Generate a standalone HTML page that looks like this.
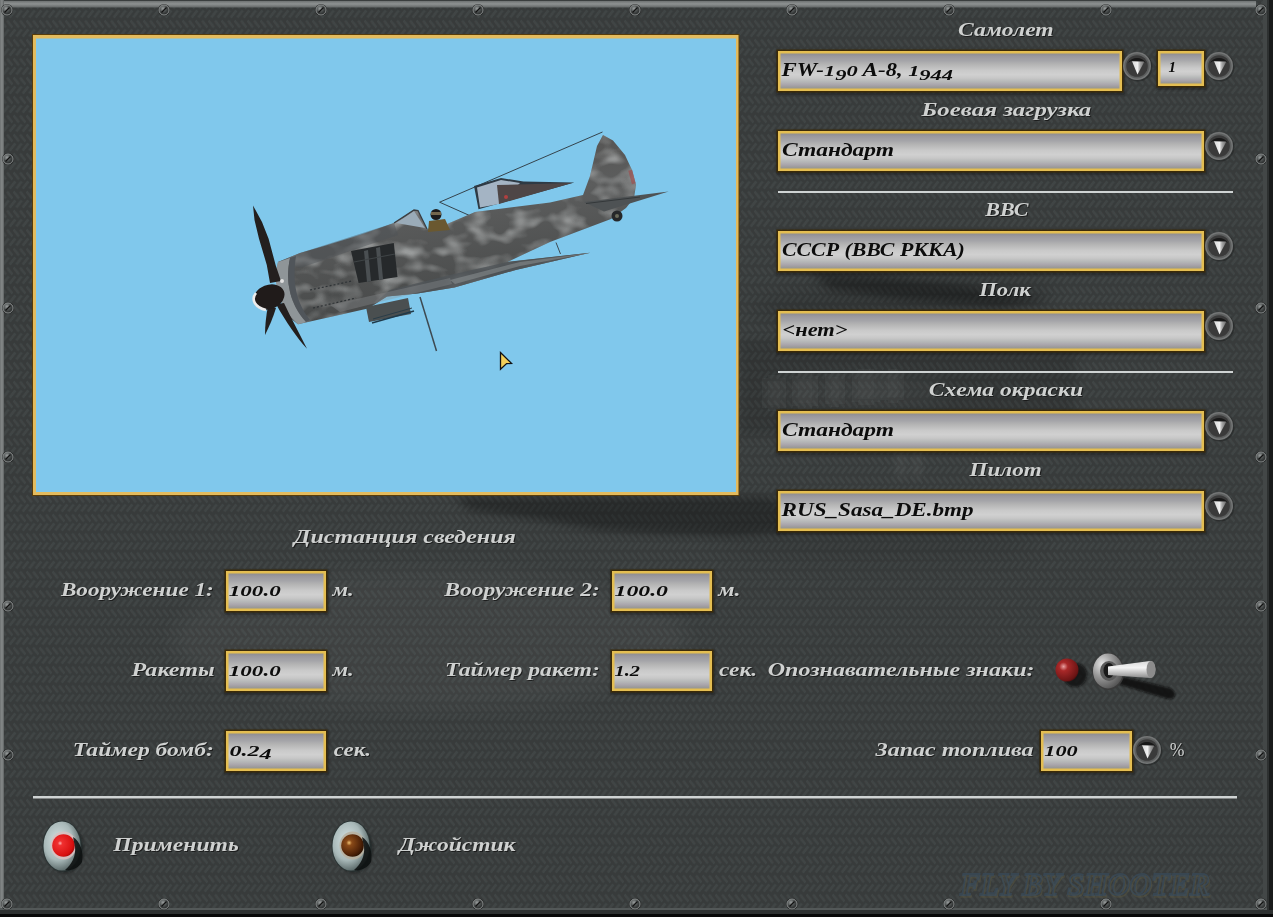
<!DOCTYPE html><html><head><meta charset="utf-8"><style>
html,body{margin:0;padding:0;}body{width:1273px;height:917px;overflow:hidden;background:#3a3d3d;position:relative;}
svg{position:absolute;left:0;top:0;}
</style></head><body>
<svg width="1273" height="917" viewBox="0 0 1273 917">
<defs>
<linearGradient id="fg" x1="0" y1="0" x2="0" y2="1"><stop offset="0" stop-color="#8e8c90"/><stop offset="0.08" stop-color="#9a989e"/><stop offset="0.2" stop-color="#a4a4a8"/><stop offset="0.31" stop-color="#b4b4b4"/><stop offset="0.49" stop-color="#cacaca"/><stop offset="0.6" stop-color="#d0d0d0"/><stop offset="0.7" stop-color="#c8c8c8"/><stop offset="0.8" stop-color="#b6b8b8"/><stop offset="0.89" stop-color="#aaa6ac"/><stop offset="1" stop-color="#94948f"/></linearGradient>
<clipPath id="bluec"><rect x="36" y="38.5" width="700" height="453.5"/></clipPath>
<clipPath id="fusc"><polygon points="278,262 300,253 325,245.7 360,235 394,223 414,210 418,210.5 427,229 447,224 475,212 550,202.4 583,195 590,176 597,146 603,135 613,140.6 625,155 632,170 636,185 634,198 626,208 611,219 550,242 507.5,261.9 590.2,252.7 515.7,270 454.4,287.4 417.6,293.5 387,296.6 368,308.6 298,324.3 290,318 282,300 276,280"/></clipPath>
<filter id="mottle" x="0" y="0" width="100%" height="100%"><feTurbulence type="fractalNoise" baseFrequency="0.045 0.07" numOctaves="2" seed="11"/><feColorMatrix type="matrix" values="0 0 0 0 0.58  0 0 0 0 0.60  0 0 0 0 0.60  2.4 0 0 0 -1.05"/></filter>
<linearGradient id="pfus" x1="0" y1="0" x2="0.25" y2="1"><stop offset="0" stop-color="#504e4c"/><stop offset="0.45" stop-color="#5c5d5d"/><stop offset="1" stop-color="#464848"/></linearGradient>
<linearGradient id="topstrip" x1="0" y1="0" x2="0" y2="1"><stop offset="0" stop-color="#6e7272"/><stop offset="0.45" stop-color="#8e9292"/><stop offset="1" stop-color="#626666"/></linearGradient>
<linearGradient id="leftstrip" x1="0" y1="0" x2="1" y2="0"><stop offset="0" stop-color="#6e7272"/><stop offset="0.5" stop-color="#868a8a"/><stop offset="1" stop-color="#5e6262"/></linearGradient>
<radialGradient id="screw" cx="0.4" cy="0.35" r="0.7"><stop offset="0" stop-color="#9a9e9e"/><stop offset="0.5" stop-color="#4a4e4e"/><stop offset="1" stop-color="#1e2020"/></radialGradient>
<radialGradient id="reddome" cx="0.35" cy="0.4" r="0.7"><stop offset="0" stop-color="#ffb0b0"/><stop offset="0.15" stop-color="#f03030"/><stop offset="0.8" stop-color="#d81010"/><stop offset="1" stop-color="#a00808"/></radialGradient>
<radialGradient id="browndome" cx="0.35" cy="0.38" r="0.7"><stop offset="0" stop-color="#f0c070"/><stop offset="0.18" stop-color="#8a4a18"/><stop offset="0.75" stop-color="#4e2208"/><stop offset="1" stop-color="#2a1000"/></radialGradient>
<radialGradient id="ring" cx="0.4" cy="0.4" r="0.65"><stop offset="0" stop-color="#d8e4e4"/><stop offset="0.6" stop-color="#a8b8b8"/><stop offset="1" stop-color="#4e5c5c"/></radialGradient>
<radialGradient id="led" cx="0.35" cy="0.35" r="0.75"><stop offset="0" stop-color="#e8a0a0"/><stop offset="0.25" stop-color="#a82828"/><stop offset="0.85" stop-color="#6a1414"/><stop offset="1" stop-color="#3a0a0a"/></radialGradient>
<radialGradient id="tbase" cx="0.3" cy="0.3" r="0.8"><stop offset="0" stop-color="#e4e4e4"/><stop offset="0.45" stop-color="#9a9a9a"/><stop offset="1" stop-color="#4e4e4e"/></radialGradient>
<linearGradient id="lever" x1="0" y1="0" x2="0" y2="1"><stop offset="0" stop-color="#d8d8d8"/><stop offset="0.4" stop-color="#f4f4f4"/><stop offset="1" stop-color="#8a8a8a"/></linearGradient>
<radialGradient id="ddinner" cx="0.5" cy="0.7" r="0.7"><stop offset="0" stop-color="#4a4a4a"/><stop offset="1" stop-color="#1e1e1e"/></radialGradient>
<linearGradient id="tri" x1="0" y1="0" x2="1" y2="0"><stop offset="0" stop-color="#d8d8d8"/><stop offset="0.45" stop-color="#f0f0f0"/><stop offset="0.65" stop-color="#a8a8a8"/><stop offset="1" stop-color="#6a6a6a"/></linearGradient>
<pattern id="herring" x="0" y="0" width="6.5" height="19" patternUnits="userSpaceOnUse"><rect width="6.5" height="19" fill="#373b3b"/><path d="M0.5,1.5 L6,8.5 M3.25,17.5 L8.75,10.5 M-3.25,17.5 L2.25,10.5" stroke="#414545" stroke-width="2.6"/></pattern>
<filter id="blur3" x="0" y="0" width="1273" height="917" filterUnits="userSpaceOnUse"><feGaussianBlur stdDeviation="4"/></filter>
<filter id="hblur" x="0" y="0" width="1273" height="917" filterUnits="userSpaceOnUse"><feGaussianBlur stdDeviation="0.7"/></filter>
<filter id="blur2" x="-50%" y="-50%" width="200%" height="200%"><feGaussianBlur stdDeviation="2"/></filter>
<filter id="blur1" x="-50%" y="-50%" width="200%" height="200%"><feGaussianBlur stdDeviation="1"/></filter>
<filter id="blur8" x="0" y="0" width="1273" height="917" filterUnits="userSpaceOnUse"><feGaussianBlur stdDeviation="10"/></filter>
</defs>
<rect x="0" y="0" width="1273" height="917" fill="#3a3d3d"/>
<rect x="0" y="0" width="1273" height="917" fill="url(#herring)" filter="url(#hblur)"/>
<rect x="0" y="0" width="1273" height="1" fill="#3a3e3e"/>
<rect x="0" y="1" width="1256" height="6.5" fill="url(#topstrip)"/>
<g filter="url(#blur8)">
<ellipse cx="900" cy="300" rx="150" ry="22" fill="#000" opacity="0.12" transform="rotate(-4 900 300)"/>
<ellipse cx="860" cy="392" rx="90" ry="16" fill="#fff" opacity="0.05"/>
<ellipse cx="880" cy="545" rx="160" ry="16" fill="#000" opacity="0.07"/>
<ellipse cx="430" cy="640" rx="260" ry="70" fill="#fff" opacity="0.035"/>
</g>
<g filter="url(#blur3)"><polygon points="455,497 770,497 795,515 785,532 730,536 660,534 600,530 540,520 470,510" fill="#000" opacity="0.3"/>
<polygon points="810,272 880,276 960,285 1050,300 1000,307 900,299 830,289" fill="#000" opacity="0.3"/>
<polygon points="740,340 1075,335 1075,425 740,435" fill="#000" opacity="0.12"/>
<path d="M765,378 h18 v30 h-18 z M795,376 h20 v30 h-20 z M828,374 h14 v30 h-14 z M855,372 h22 v30 h-22 z M885,372 h16 v28 h-16 z" fill="#fff" opacity="0.04"/>
<path d="M897,448 h8 v30 h-8 z M913,448 h8 v30 h-8 z" fill="#fff" opacity="0.06"/>
</g>
<rect x="0" y="0" width="4" height="917" fill="url(#leftstrip)"/>
<rect x="1263" y="0" width="4" height="917" fill="#434747"/>
<rect x="1267" y="0" width="2" height="917" fill="#2e3131"/>
<rect x="1269" y="0" width="4" height="917" fill="#191b1b"/>
<rect x="0" y="908" width="1267" height="2" fill="#535858"/>
<rect x="0" y="910" width="1273" height="4" fill="#2e3131"/>
<rect x="0" y="914" width="1273" height="3" fill="#080808"/>
<circle cx="7" cy="10" r="6" fill="#202222" opacity="0.8"/>
<circle cx="7" cy="10" r="5" fill="url(#screw)" stroke="#8a8e8e" stroke-width="1"/>
<line x1="4.5" y1="12.5" x2="9.5" y2="7.5" stroke="#111" stroke-width="1.3"/>
<circle cx="7" cy="904" r="6" fill="#202222" opacity="0.8"/>
<circle cx="7" cy="904" r="5" fill="url(#screw)" stroke="#8a8e8e" stroke-width="1"/>
<line x1="4.5" y1="906.5" x2="9.5" y2="901.5" stroke="#111" stroke-width="1.3"/>
<circle cx="164" cy="10" r="6" fill="#202222" opacity="0.8"/>
<circle cx="164" cy="10" r="5" fill="url(#screw)" stroke="#8a8e8e" stroke-width="1"/>
<line x1="161.5" y1="12.5" x2="166.5" y2="7.5" stroke="#111" stroke-width="1.3"/>
<circle cx="164" cy="904" r="6" fill="#202222" opacity="0.8"/>
<circle cx="164" cy="904" r="5" fill="url(#screw)" stroke="#8a8e8e" stroke-width="1"/>
<line x1="161.5" y1="906.5" x2="166.5" y2="901.5" stroke="#111" stroke-width="1.3"/>
<circle cx="321" cy="10" r="6" fill="#202222" opacity="0.8"/>
<circle cx="321" cy="10" r="5" fill="url(#screw)" stroke="#8a8e8e" stroke-width="1"/>
<line x1="318.5" y1="12.5" x2="323.5" y2="7.5" stroke="#111" stroke-width="1.3"/>
<circle cx="321" cy="904" r="6" fill="#202222" opacity="0.8"/>
<circle cx="321" cy="904" r="5" fill="url(#screw)" stroke="#8a8e8e" stroke-width="1"/>
<line x1="318.5" y1="906.5" x2="323.5" y2="901.5" stroke="#111" stroke-width="1.3"/>
<circle cx="478" cy="10" r="6" fill="#202222" opacity="0.8"/>
<circle cx="478" cy="10" r="5" fill="url(#screw)" stroke="#8a8e8e" stroke-width="1"/>
<line x1="475.5" y1="12.5" x2="480.5" y2="7.5" stroke="#111" stroke-width="1.3"/>
<circle cx="478" cy="904" r="6" fill="#202222" opacity="0.8"/>
<circle cx="478" cy="904" r="5" fill="url(#screw)" stroke="#8a8e8e" stroke-width="1"/>
<line x1="475.5" y1="906.5" x2="480.5" y2="901.5" stroke="#111" stroke-width="1.3"/>
<circle cx="635" cy="10" r="6" fill="#202222" opacity="0.8"/>
<circle cx="635" cy="10" r="5" fill="url(#screw)" stroke="#8a8e8e" stroke-width="1"/>
<line x1="632.5" y1="12.5" x2="637.5" y2="7.5" stroke="#111" stroke-width="1.3"/>
<circle cx="635" cy="904" r="6" fill="#202222" opacity="0.8"/>
<circle cx="635" cy="904" r="5" fill="url(#screw)" stroke="#8a8e8e" stroke-width="1"/>
<line x1="632.5" y1="906.5" x2="637.5" y2="901.5" stroke="#111" stroke-width="1.3"/>
<circle cx="792" cy="10" r="6" fill="#202222" opacity="0.8"/>
<circle cx="792" cy="10" r="5" fill="url(#screw)" stroke="#8a8e8e" stroke-width="1"/>
<line x1="789.5" y1="12.5" x2="794.5" y2="7.5" stroke="#111" stroke-width="1.3"/>
<circle cx="792" cy="904" r="6" fill="#202222" opacity="0.8"/>
<circle cx="792" cy="904" r="5" fill="url(#screw)" stroke="#8a8e8e" stroke-width="1"/>
<line x1="789.5" y1="906.5" x2="794.5" y2="901.5" stroke="#111" stroke-width="1.3"/>
<circle cx="949" cy="10" r="6" fill="#202222" opacity="0.8"/>
<circle cx="949" cy="10" r="5" fill="url(#screw)" stroke="#8a8e8e" stroke-width="1"/>
<line x1="946.5" y1="12.5" x2="951.5" y2="7.5" stroke="#111" stroke-width="1.3"/>
<circle cx="949" cy="904" r="6" fill="#202222" opacity="0.8"/>
<circle cx="949" cy="904" r="5" fill="url(#screw)" stroke="#8a8e8e" stroke-width="1"/>
<line x1="946.5" y1="906.5" x2="951.5" y2="901.5" stroke="#111" stroke-width="1.3"/>
<circle cx="1106" cy="10" r="6" fill="#202222" opacity="0.8"/>
<circle cx="1106" cy="10" r="5" fill="url(#screw)" stroke="#8a8e8e" stroke-width="1"/>
<line x1="1103.5" y1="12.5" x2="1108.5" y2="7.5" stroke="#111" stroke-width="1.3"/>
<circle cx="1106" cy="904" r="6" fill="#202222" opacity="0.8"/>
<circle cx="1106" cy="904" r="5" fill="url(#screw)" stroke="#8a8e8e" stroke-width="1"/>
<line x1="1103.5" y1="906.5" x2="1108.5" y2="901.5" stroke="#111" stroke-width="1.3"/>
<circle cx="1261" cy="10" r="6" fill="#202222" opacity="0.8"/>
<circle cx="1261" cy="10" r="5" fill="url(#screw)" stroke="#8a8e8e" stroke-width="1"/>
<line x1="1258.5" y1="12.5" x2="1263.5" y2="7.5" stroke="#111" stroke-width="1.3"/>
<circle cx="1261" cy="904" r="6" fill="#202222" opacity="0.8"/>
<circle cx="1261" cy="904" r="5" fill="url(#screw)" stroke="#8a8e8e" stroke-width="1"/>
<line x1="1258.5" y1="906.5" x2="1263.5" y2="901.5" stroke="#111" stroke-width="1.3"/>
<circle cx="8" cy="159" r="6" fill="#202222" opacity="0.8"/>
<circle cx="8" cy="159" r="5" fill="url(#screw)" stroke="#8a8e8e" stroke-width="1"/>
<line x1="5.5" y1="161.5" x2="10.5" y2="156.5" stroke="#111" stroke-width="1.3"/>
<circle cx="1261" cy="159" r="6" fill="#202222" opacity="0.8"/>
<circle cx="1261" cy="159" r="5" fill="url(#screw)" stroke="#8a8e8e" stroke-width="1"/>
<line x1="1258.5" y1="161.5" x2="1263.5" y2="156.5" stroke="#111" stroke-width="1.3"/>
<circle cx="8" cy="308" r="6" fill="#202222" opacity="0.8"/>
<circle cx="8" cy="308" r="5" fill="url(#screw)" stroke="#8a8e8e" stroke-width="1"/>
<line x1="5.5" y1="310.5" x2="10.5" y2="305.5" stroke="#111" stroke-width="1.3"/>
<circle cx="1261" cy="308" r="6" fill="#202222" opacity="0.8"/>
<circle cx="1261" cy="308" r="5" fill="url(#screw)" stroke="#8a8e8e" stroke-width="1"/>
<line x1="1258.5" y1="310.5" x2="1263.5" y2="305.5" stroke="#111" stroke-width="1.3"/>
<circle cx="8" cy="457" r="6" fill="#202222" opacity="0.8"/>
<circle cx="8" cy="457" r="5" fill="url(#screw)" stroke="#8a8e8e" stroke-width="1"/>
<line x1="5.5" y1="459.5" x2="10.5" y2="454.5" stroke="#111" stroke-width="1.3"/>
<circle cx="1261" cy="457" r="6" fill="#202222" opacity="0.8"/>
<circle cx="1261" cy="457" r="5" fill="url(#screw)" stroke="#8a8e8e" stroke-width="1"/>
<line x1="1258.5" y1="459.5" x2="1263.5" y2="454.5" stroke="#111" stroke-width="1.3"/>
<circle cx="8" cy="606" r="6" fill="#202222" opacity="0.8"/>
<circle cx="8" cy="606" r="5" fill="url(#screw)" stroke="#8a8e8e" stroke-width="1"/>
<line x1="5.5" y1="608.5" x2="10.5" y2="603.5" stroke="#111" stroke-width="1.3"/>
<circle cx="1261" cy="606" r="6" fill="#202222" opacity="0.8"/>
<circle cx="1261" cy="606" r="5" fill="url(#screw)" stroke="#8a8e8e" stroke-width="1"/>
<line x1="1258.5" y1="608.5" x2="1263.5" y2="603.5" stroke="#111" stroke-width="1.3"/>
<circle cx="8" cy="755" r="6" fill="#202222" opacity="0.8"/>
<circle cx="8" cy="755" r="5" fill="url(#screw)" stroke="#8a8e8e" stroke-width="1"/>
<line x1="5.5" y1="757.5" x2="10.5" y2="752.5" stroke="#111" stroke-width="1.3"/>
<circle cx="1261" cy="755" r="6" fill="#202222" opacity="0.8"/>
<circle cx="1261" cy="755" r="5" fill="url(#screw)" stroke="#8a8e8e" stroke-width="1"/>
<line x1="1258.5" y1="757.5" x2="1263.5" y2="752.5" stroke="#111" stroke-width="1.3"/>
<g font-family="'Liberation Serif', serif" font-style="italic" font-weight="bold" fill="none">
<text x="961" y="897" font-size="32" stroke="#5e5a40" stroke-width="1.6" opacity="0.45" textLength="250" lengthAdjust="spacingAndGlyphs">FLY BY SHOOTER</text>
<text x="960" y="895" font-size="32" stroke="#3a4c5c" stroke-width="1.8" opacity="0.7" textLength="250" lengthAdjust="spacingAndGlyphs">FLY BY SHOOTER</text>
</g>
<rect x="32" y="34" width="707.5" height="462" fill="#5a3c08"/>
<rect x="33" y="35" width="705.5" height="460" fill="#e3bb5e"/>
<rect x="36" y="38.5" width="700" height="453.5" fill="#80c8ec"/>
<g clip-path="url(#bluec)">
<polyline points="602.5,132 439.6,202.2 472,216.6" fill="none" stroke="#34434c" stroke-width="1"/>
<polygon points="474,186 501,178 523.5,181.6 574.4,182.5 478.5,209.3" fill="#2e3a44"/>
<polygon points="477,187.5 501,180 520,183 499,204 480,207.5" fill="#a4b4c4"/>
<polygon points="497,185 572,183 499,204" fill="#4e4646"/>
<circle cx="506" cy="197" r="2" fill="#b04040"/>
<polygon points="278,262 300,253 325,245.7 360,235 394,223 414,210 418,210.5 427,229 447,224 475,212 550,202.4 583,195 590,176 597,146 603,135 613,140.6 625,155 632,170 636,185 634,198 626,208 611,219 550,242 507.5,261.9 590.2,252.7 515.7,270 454.4,287.4 417.6,293.5 387,296.6 368,308.6 298,324.3 290,318 282,300 276,280" fill="url(#pfus)"/>
<g clip-path="url(#fusc)"><rect x="270" y="130" width="400" height="200" filter="url(#mottle)" opacity="0.6"/></g>
<polygon points="590.2,252.7 507.5,262 450,275 390,290 368,308.6 387,296.6 417.6,293.5 454.4,287.4 515.7,270" fill="#4f5457" opacity="0.8"/>
<polygon points="590,253 520,262 450,280 455,284 520,266" fill="#8a8f92" opacity="0.55"/>
<polygon points="330,305 450,278 452,284 340,312" fill="#8e9396" opacity="0.35"/>
<polygon points="278,262 300,253 394,223 398,235 300,268" fill="#4e5356" opacity="0.45"/>
<polygon points="584,202 668.6,191.6 604,211.5" fill="#4e5254"/><line x1="586" y1="203.5" x2="640" y2="197" stroke="#34383a" stroke-width="1"/>
<circle cx="617" cy="216" r="5.5" fill="#26282a"/>
<circle cx="617" cy="216" r="2" fill="#6a6a5a"/><rect x="630" y="170" width="4" height="14" fill="#a04848" opacity="0.6" transform="rotate(-15 632 177)"/>
<path d="M278,262 C272,282 278,306 298,324.3 L306,322 C290,304 285,282 290,258 Z" fill="#8f9598"/>
<path d="M290,258 C285,282 290,304 306,322 L310,320 C296,302 292,282 296,256 Z" fill="#50555a"/>
<polygon points="351,251 393.8,243 397.5,277 358.6,283" fill="#26292b"/>
<polygon points="364,251 368,250 371,281 367,282" fill="#4a4f52"/>
<polygon points="376,248 380,247 383,279 379,280" fill="#4a4f52"/>
<line x1="354" y1="262" x2="395" y2="254" stroke="#3e4345" stroke-width="1.2"/>
<line x1="310" y1="290" x2="352" y2="281" stroke="#2e3235" stroke-width="1.2" stroke-dasharray="2 2"/>
<line x1="313" y1="308" x2="356" y2="298" stroke="#2e3235" stroke-width="1.2" stroke-dasharray="2 2"/>
<polygon points="396,223 414,211 425,228" fill="#9aabb8"/>
<polyline points="394,223 414,210 418,210.5 427,229" fill="none" stroke="#3a3e42" stroke-width="1.3"/>
<circle cx="436" cy="214.5" r="5.5" fill="#1c1c1c"/>
<rect x="431" y="212" width="10" height="3" fill="#8a7a5a" opacity="0.8"/>
<polygon points="429,221 445,219 450,230 428,232" fill="#6a5830"/>
<polygon points="366,307 408,298 411,314 369,322" fill="#4a4f50"/>
<line x1="372" y1="323" x2="414" y2="311" stroke="#1f3a4a" stroke-width="1.5"/>
<line x1="373" y1="319" x2="412" y2="308" stroke="#2a3d48" stroke-width="1"/>
<line x1="420" y1="297" x2="436.5" y2="351" stroke="#3d4a52" stroke-width="1.5"/>
<line x1="556" y1="242.5" x2="560.5" y2="254" stroke="#3d4a52" stroke-width="1"/>
<polygon points="253,205.5 262,222 268.6,238.7 275.6,264.9 281,281 270,283 266.8,264.9 259,238.7 254.5,220" fill="#231f1e"/>
<path d="M268,306 L276,308 C273,318 269,327 265,335 C265,326 266,316 268,306 Z" fill="#231f1e"/>
<path d="M276,304 L284,303 C291,318 299,333 307,348.7 C297,338 286,322 276,304 Z" fill="#231f1e"/>
<ellipse cx="269" cy="297" rx="16" ry="12" transform="rotate(-22 269 297)" fill="#201b1a"/>
<path d="M256,293 C251,299 254,307 266,310" fill="none" stroke="#ececec" stroke-width="2.6"/>
<circle cx="282" cy="281" r="2" fill="#e0e0e0"/>
</g>
<polygon points="500.5,352.5 511.5,363.4 506.6,363.6 500.5,369.3" fill="#f2cf5a" stroke="#111" stroke-width="1.3" stroke-linejoin="miter"/>
<rect x="776" y="50" width="349" height="45" fill="#141818" opacity="0.45" filter="url(#blur1)"/>
<rect x="1156" y="50" width="51" height="40" fill="#141818" opacity="0.45" filter="url(#blur1)"/>
<rect x="776" y="130" width="431" height="45" fill="#141818" opacity="0.45" filter="url(#blur1)"/>
<rect x="776" y="230" width="431" height="45" fill="#141818" opacity="0.45" filter="url(#blur1)"/>
<rect x="776" y="310" width="431" height="45" fill="#141818" opacity="0.45" filter="url(#blur1)"/>
<rect x="776" y="410" width="431" height="45" fill="#141818" opacity="0.45" filter="url(#blur1)"/>
<rect x="776" y="490" width="431" height="45" fill="#141818" opacity="0.45" filter="url(#blur1)"/>
<rect x="224" y="570" width="105" height="45" fill="#141818" opacity="0.45" filter="url(#blur1)"/>
<rect x="610" y="570" width="105" height="45" fill="#141818" opacity="0.45" filter="url(#blur1)"/>
<rect x="224" y="650" width="105" height="45" fill="#141818" opacity="0.45" filter="url(#blur1)"/>
<rect x="610" y="650" width="105" height="45" fill="#141818" opacity="0.45" filter="url(#blur1)"/>
<rect x="224" y="730" width="105" height="45" fill="#141818" opacity="0.45" filter="url(#blur1)"/>
<rect x="1039" y="730" width="96" height="45" fill="#141818" opacity="0.45" filter="url(#blur1)"/>
<rect x="776.5" y="49.5" width="347" height="43" fill="#3e2a04" opacity="0.85"/>
<rect x="778" y="51" width="344" height="40" fill="#e4be52"/>
<rect x="780.5" y="53.5" width="339" height="35" fill="url(#fg)"/>
<rect x="1156.5" y="49.5" width="49" height="38" fill="#3e2a04" opacity="0.85"/>
<rect x="1158" y="51" width="46" height="35" fill="#e4be52"/>
<rect x="1160.5" y="53.5" width="41" height="30" fill="url(#fg)"/>
<rect x="776.5" y="129.5" width="429" height="43" fill="#3e2a04" opacity="0.85"/>
<rect x="778" y="131" width="426" height="40" fill="#e4be52"/>
<rect x="780.5" y="133.5" width="421" height="35" fill="url(#fg)"/>
<rect x="776.5" y="229.5" width="429" height="43" fill="#3e2a04" opacity="0.85"/>
<rect x="778" y="231" width="426" height="40" fill="#e4be52"/>
<rect x="780.5" y="233.5" width="421" height="35" fill="url(#fg)"/>
<rect x="776.5" y="309.5" width="429" height="43" fill="#3e2a04" opacity="0.85"/>
<rect x="778" y="311" width="426" height="40" fill="#e4be52"/>
<rect x="780.5" y="313.5" width="421" height="35" fill="url(#fg)"/>
<rect x="776.5" y="409.5" width="429" height="43" fill="#3e2a04" opacity="0.85"/>
<rect x="778" y="411" width="426" height="40" fill="#e4be52"/>
<rect x="780.5" y="413.5" width="421" height="35" fill="url(#fg)"/>
<rect x="776.5" y="489.5" width="429" height="43" fill="#3e2a04" opacity="0.85"/>
<rect x="778" y="491" width="426" height="40" fill="#e4be52"/>
<rect x="780.5" y="493.5" width="421" height="35" fill="url(#fg)"/>
<rect x="224.5" y="569.5" width="103" height="43" fill="#3e2a04" opacity="0.85"/>
<rect x="226" y="571" width="100" height="40" fill="#e4be52"/>
<rect x="228.5" y="573.5" width="95" height="35" fill="url(#fg)"/>
<rect x="610.5" y="569.5" width="103" height="43" fill="#3e2a04" opacity="0.85"/>
<rect x="612" y="571" width="100" height="40" fill="#e4be52"/>
<rect x="614.5" y="573.5" width="95" height="35" fill="url(#fg)"/>
<rect x="224.5" y="649.5" width="103" height="43" fill="#3e2a04" opacity="0.85"/>
<rect x="226" y="651" width="100" height="40" fill="#e4be52"/>
<rect x="228.5" y="653.5" width="95" height="35" fill="url(#fg)"/>
<rect x="610.5" y="649.5" width="103" height="43" fill="#3e2a04" opacity="0.85"/>
<rect x="612" y="651" width="100" height="40" fill="#e4be52"/>
<rect x="614.5" y="653.5" width="95" height="35" fill="url(#fg)"/>
<rect x="224.5" y="729.5" width="103" height="43" fill="#3e2a04" opacity="0.85"/>
<rect x="226" y="731" width="100" height="40" fill="#e4be52"/>
<rect x="228.5" y="733.5" width="95" height="35" fill="url(#fg)"/>
<rect x="1039.5" y="729.5" width="94" height="43" fill="#3e2a04" opacity="0.85"/>
<rect x="1041" y="731" width="91" height="40" fill="#e4be52"/>
<rect x="1043.5" y="733.5" width="86" height="35" fill="url(#fg)"/>
<circle cx="1138" cy="67" r="14.5" fill="#1e2020" opacity="0.5"/>
<circle cx="1137" cy="66" r="14" fill="#747676"/>
<circle cx="1137" cy="66" r="12.5" fill="#5c5e5e"/>
<circle cx="1137" cy="66" r="10.8" fill="#3a3a3a"/>
<path d="M1128,63 A10.5,10.5 0 0 1 1146,63 L1143,61 L1131,61 Z" fill="#181818"/>
<polygon points="1132,61.2 1144.3,61.7 1137.5,74.4" fill="url(#tri)"/>
<circle cx="1220" cy="67" r="14.5" fill="#1e2020" opacity="0.5"/>
<circle cx="1219" cy="66" r="14" fill="#747676"/>
<circle cx="1219" cy="66" r="12.5" fill="#5c5e5e"/>
<circle cx="1219" cy="66" r="10.8" fill="#3a3a3a"/>
<path d="M1210,63 A10.5,10.5 0 0 1 1228,63 L1225,61 L1213,61 Z" fill="#181818"/>
<polygon points="1214,61.2 1226.3,61.7 1219.5,74.4" fill="url(#tri)"/>
<circle cx="1220" cy="147" r="14.5" fill="#1e2020" opacity="0.5"/>
<circle cx="1219" cy="146" r="14" fill="#747676"/>
<circle cx="1219" cy="146" r="12.5" fill="#5c5e5e"/>
<circle cx="1219" cy="146" r="10.8" fill="#3a3a3a"/>
<path d="M1210,143 A10.5,10.5 0 0 1 1228,143 L1225,141 L1213,141 Z" fill="#181818"/>
<polygon points="1214,141.2 1226.3,141.7 1219.5,154.4" fill="url(#tri)"/>
<circle cx="1220" cy="247" r="14.5" fill="#1e2020" opacity="0.5"/>
<circle cx="1219" cy="246" r="14" fill="#747676"/>
<circle cx="1219" cy="246" r="12.5" fill="#5c5e5e"/>
<circle cx="1219" cy="246" r="10.8" fill="#3a3a3a"/>
<path d="M1210,243 A10.5,10.5 0 0 1 1228,243 L1225,241 L1213,241 Z" fill="#181818"/>
<polygon points="1214,241.2 1226.3,241.7 1219.5,254.4" fill="url(#tri)"/>
<circle cx="1220" cy="327" r="14.5" fill="#1e2020" opacity="0.5"/>
<circle cx="1219" cy="326" r="14" fill="#747676"/>
<circle cx="1219" cy="326" r="12.5" fill="#5c5e5e"/>
<circle cx="1219" cy="326" r="10.8" fill="#3a3a3a"/>
<path d="M1210,323 A10.5,10.5 0 0 1 1228,323 L1225,321 L1213,321 Z" fill="#181818"/>
<polygon points="1214,321.2 1226.3,321.7 1219.5,334.4" fill="url(#tri)"/>
<circle cx="1220" cy="427" r="14.5" fill="#1e2020" opacity="0.5"/>
<circle cx="1219" cy="426" r="14" fill="#747676"/>
<circle cx="1219" cy="426" r="12.5" fill="#5c5e5e"/>
<circle cx="1219" cy="426" r="10.8" fill="#3a3a3a"/>
<path d="M1210,423 A10.5,10.5 0 0 1 1228,423 L1225,421 L1213,421 Z" fill="#181818"/>
<polygon points="1214,421.2 1226.3,421.7 1219.5,434.4" fill="url(#tri)"/>
<circle cx="1220" cy="507" r="14.5" fill="#1e2020" opacity="0.5"/>
<circle cx="1219" cy="506" r="14" fill="#747676"/>
<circle cx="1219" cy="506" r="12.5" fill="#5c5e5e"/>
<circle cx="1219" cy="506" r="10.8" fill="#3a3a3a"/>
<path d="M1210,503 A10.5,10.5 0 0 1 1228,503 L1225,501 L1213,501 Z" fill="#181818"/>
<polygon points="1214,501.2 1226.3,501.7 1219.5,514.4" fill="url(#tri)"/>
<circle cx="1148" cy="751" r="14.5" fill="#1e2020" opacity="0.5"/>
<circle cx="1147" cy="750" r="14" fill="#747676"/>
<circle cx="1147" cy="750" r="12.5" fill="#5c5e5e"/>
<circle cx="1147" cy="750" r="10.8" fill="#3a3a3a"/>
<path d="M1138,747 A10.5,10.5 0 0 1 1156,747 L1153,745 L1141,745 Z" fill="#181818"/>
<polygon points="1142,745.2 1154.3,745.7 1147.5,758.4" fill="url(#tri)"/>
<ellipse cx="65" cy="849" rx="19" ry="24" fill="#101212" opacity="0.5" filter="url(#blur1)"/>
<ellipse cx="62" cy="846" rx="19.5" ry="25.5" fill="#2a3434"/>
<ellipse cx="62" cy="846" rx="18.5" ry="24.5" fill="url(#ring)"/>
<ellipse cx="63.5" cy="845.5" rx="13" ry="14" fill="#d8c0c0" opacity="0.9"/>
<circle cx="63.5" cy="845.5" r="11.3" fill="url(#reddome)"/>
<path d="M73,837 C80,841 84,852 82,862 C78,869 70,871 65,870 C72,864 76,856 75,847 Z" fill="#0e1212" opacity="0.9"/>
<ellipse cx="354" cy="849" rx="19" ry="24" fill="#101212" opacity="0.5" filter="url(#blur1)"/>
<ellipse cx="351" cy="846" rx="19.5" ry="25.5" fill="#2a3434"/>
<ellipse cx="351" cy="846" rx="18.5" ry="24.5" fill="url(#ring)"/>
<ellipse cx="352.5" cy="845.5" rx="13" ry="14" fill="#b8b0a0" opacity="0.9"/>
<circle cx="352.5" cy="845.5" r="11.3" fill="url(#browndome)"/>
<path d="M362,837 C369,841 373,852 371,862 C367,869 359,871 354,870 C361,864 365,856 364,847 Z" fill="#0e1212" opacity="0.9"/>
<circle cx="1075" cy="675" r="12" fill="#0a0a0a" opacity="0.75" filter="url(#blur1)"/>
<circle cx="1067" cy="670" r="11.5" fill="url(#led)"/>
<path d="M1120,676 L1170,688 C1178,692 1176,700 1168,699 L1118,684 Z" fill="#0c0c0c" opacity="0.85" filter="url(#blur1)"/>
<ellipse cx="1108.5" cy="671.5" rx="16" ry="18.5" fill="#3a3a3a"/>
<ellipse cx="1108" cy="671" rx="15" ry="17.5" fill="url(#tbase)"/>
<ellipse cx="1109" cy="671" rx="9" ry="10" fill="#5a5a5a"/>
<ellipse cx="1109" cy="670.5" rx="5.5" ry="7.5" fill="#1a1a1a"/>
<path d="M1108,666.5 L1150,661 C1157,661 1157,678 1150,678 L1108,675 Z" fill="url(#lever)"/>
<ellipse cx="1151" cy="669.5" rx="4.5" ry="8.5" fill="#8c8c8c"/>
<rect x="778" y="191" width="455" height="2" fill="#cfd3d3"/>
<rect x="778" y="371" width="455" height="2" fill="#cfd3d3"/>
<rect x="33" y="796" width="1204" height="2.5" fill="#cfd3d3"/>
<g font-family="'Liberation Serif', serif" font-weight="bold" font-style="italic">
<text x="959.0" y="36.9" textLength="95.7" lengthAdjust="spacingAndGlyphs" font-size="19" fill="#111" fill-opacity="0.75" >Самолет</text>
<text x="958.0" y="35.7" textLength="95.7" lengthAdjust="spacingAndGlyphs" font-size="19" fill="#cfd1d0" >Самолет</text>
<text xml:space="preserve" style="white-space:pre" x="781.60" y="76.0" textLength="42.39" lengthAdjust="spacingAndGlyphs" font-size="19" fill="#0c0c0c">FW-</text>
<text transform="translate(823.99,76.00) scale(1,0.72)" x="0" y="0" textLength="11.22" lengthAdjust="spacingAndGlyphs" font-size="19" fill="#0c0c0c">1</text>
<text transform="translate(835.21,79.61) scale(1,0.72)" x="0" y="0" textLength="11.22" lengthAdjust="spacingAndGlyphs" font-size="19" fill="#0c0c0c">9</text>
<text transform="translate(846.42,76.00) scale(1,0.72)" x="0" y="0" textLength="11.22" lengthAdjust="spacingAndGlyphs" font-size="19" fill="#0c0c0c">0</text>
<text xml:space="preserve" style="white-space:pre" x="857.64" y="76.0" textLength="28.05" lengthAdjust="spacingAndGlyphs" font-size="19" fill="#0c0c0c"> A-</text>
<text transform="translate(885.69,76.00) scale(1,0.95)" x="0" y="0" textLength="11.22" lengthAdjust="spacingAndGlyphs" font-size="19" fill="#0c0c0c">8</text>
<text xml:space="preserve" style="white-space:pre" x="896.91" y="76.0" textLength="11.22" lengthAdjust="spacingAndGlyphs" font-size="19" fill="#0c0c0c">, </text>
<text transform="translate(908.13,76.00) scale(1,0.72)" x="0" y="0" textLength="11.22" lengthAdjust="spacingAndGlyphs" font-size="19" fill="#0c0c0c">1</text>
<text transform="translate(919.34,79.61) scale(1,0.72)" x="0" y="0" textLength="11.22" lengthAdjust="spacingAndGlyphs" font-size="19" fill="#0c0c0c">9</text>
<text transform="translate(930.56,79.61) scale(1,0.72)" x="0" y="0" textLength="11.22" lengthAdjust="spacingAndGlyphs" font-size="19" fill="#0c0c0c">4</text>
<text transform="translate(941.78,79.61) scale(1,0.72)" x="0" y="0" textLength="11.22" lengthAdjust="spacingAndGlyphs" font-size="19" fill="#0c0c0c">4</text>
<text transform="translate(1168.50,72.40) scale(1,0.72)" x="0" y="0" textLength="7.50" lengthAdjust="spacingAndGlyphs" font-size="19" fill="#0c0c0c">1</text>
<text x="922.6" y="116.8" textLength="169.7" lengthAdjust="spacingAndGlyphs" font-size="19" fill="#111" fill-opacity="0.75" >Боевая загрузка</text>
<text x="921.6" y="115.6" textLength="169.7" lengthAdjust="spacingAndGlyphs" font-size="19" fill="#cfd1d0" >Боевая загрузка</text>
<text x="781.9" y="155.9" textLength="112.2" lengthAdjust="spacingAndGlyphs" font-size="19" fill="#0c0c0c">Стандарт</text>
<text x="986.2" y="217.2" textLength="43.2" lengthAdjust="spacingAndGlyphs" font-size="19" fill="#111" fill-opacity="0.75" >ВВС</text>
<text x="985.2" y="216.0" textLength="43.2" lengthAdjust="spacingAndGlyphs" font-size="19" fill="#cfd1d0" >ВВС</text>
<text x="781.9" y="255.6" textLength="182.9" lengthAdjust="spacingAndGlyphs" font-size="19" fill="#0c0c0c">СССР (ВВС РККА)</text>
<text x="980.2" y="296.8" textLength="51.6" lengthAdjust="spacingAndGlyphs" font-size="19" fill="#111" fill-opacity="0.75" >Полк</text>
<text x="979.2" y="295.6" textLength="51.6" lengthAdjust="spacingAndGlyphs" font-size="19" fill="#cfd1d0" >Полк</text>
<text x="782.4" y="335.6" textLength="65.2" lengthAdjust="spacingAndGlyphs" font-size="19" fill="#0c0c0c">&lt;нет&gt;</text>
<text x="929.7" y="397.3" textLength="154.4" lengthAdjust="spacingAndGlyphs" font-size="19" fill="#111" fill-opacity="0.75" >Схема окраски</text>
<text x="928.7" y="396.1" textLength="154.4" lengthAdjust="spacingAndGlyphs" font-size="19" fill="#cfd1d0" >Схема окраски</text>
<text x="781.9" y="435.9" textLength="112.2" lengthAdjust="spacingAndGlyphs" font-size="19" fill="#0c0c0c">Стандарт</text>
<text x="970.4" y="477.0" textLength="72.4" lengthAdjust="spacingAndGlyphs" font-size="19" fill="#111" fill-opacity="0.75" >Пилот</text>
<text x="969.4" y="475.8" textLength="72.4" lengthAdjust="spacingAndGlyphs" font-size="19" fill="#cfd1d0" >Пилот</text>
<text x="781.5" y="516.0" textLength="192.2" lengthAdjust="spacingAndGlyphs" font-size="19" fill="#0c0c0c">RUS_Sasa_DE.bmp</text>
<text x="295.1" y="543.8" textLength="221.7" lengthAdjust="spacingAndGlyphs" font-size="19" fill="#111" fill-opacity="0.75" >Дистанция сведения</text>
<text x="294.1" y="542.6" textLength="221.7" lengthAdjust="spacingAndGlyphs" font-size="19" fill="#cfd1d0" >Дистанция сведения</text>
<text x="61.9" y="597.3" textLength="152.9" lengthAdjust="spacingAndGlyphs" font-size="19" fill="#111" fill-opacity="0.75" >Вооружение 1:</text>
<text x="60.9" y="596.1" textLength="152.9" lengthAdjust="spacingAndGlyphs" font-size="19" fill="#cfd1d0" >Вооружение 1:</text>
<text transform="translate(228.80,595.60) scale(1,0.72)" x="0" y="0" textLength="11.53" lengthAdjust="spacingAndGlyphs" font-size="19" fill="#0c0c0c">1</text>
<text transform="translate(240.33,595.60) scale(1,0.72)" x="0" y="0" textLength="11.53" lengthAdjust="spacingAndGlyphs" font-size="19" fill="#0c0c0c">0</text>
<text transform="translate(251.87,595.60) scale(1,0.72)" x="0" y="0" textLength="11.53" lengthAdjust="spacingAndGlyphs" font-size="19" fill="#0c0c0c">0</text>
<text xml:space="preserve" style="white-space:pre" x="263.40" y="595.6" textLength="5.77" lengthAdjust="spacingAndGlyphs" font-size="19" fill="#0c0c0c">.</text>
<text transform="translate(269.17,595.60) scale(1,0.72)" x="0" y="0" textLength="11.53" lengthAdjust="spacingAndGlyphs" font-size="19" fill="#0c0c0c">0</text>
<text x="333.5" y="597.3" textLength="21.3" lengthAdjust="spacingAndGlyphs" font-size="19" fill="#111" fill-opacity="0.75" >м.</text>
<text x="332.5" y="596.1" textLength="21.3" lengthAdjust="spacingAndGlyphs" font-size="19" fill="#cfd1d0" >м.</text>
<text x="445.3" y="597.3" textLength="155.5" lengthAdjust="spacingAndGlyphs" font-size="19" fill="#111" fill-opacity="0.75" >Вооружение 2:</text>
<text x="444.3" y="596.1" textLength="155.5" lengthAdjust="spacingAndGlyphs" font-size="19" fill="#cfd1d0" >Вооружение 2:</text>
<text transform="translate(614.50,595.60) scale(1,0.72)" x="0" y="0" textLength="11.89" lengthAdjust="spacingAndGlyphs" font-size="19" fill="#0c0c0c">1</text>
<text transform="translate(626.39,595.60) scale(1,0.72)" x="0" y="0" textLength="11.89" lengthAdjust="spacingAndGlyphs" font-size="19" fill="#0c0c0c">0</text>
<text transform="translate(638.28,595.60) scale(1,0.72)" x="0" y="0" textLength="11.89" lengthAdjust="spacingAndGlyphs" font-size="19" fill="#0c0c0c">0</text>
<text xml:space="preserve" style="white-space:pre" x="650.17" y="595.6" textLength="5.94" lengthAdjust="spacingAndGlyphs" font-size="19" fill="#0c0c0c">.</text>
<text transform="translate(656.11,595.60) scale(1,0.72)" x="0" y="0" textLength="11.89" lengthAdjust="spacingAndGlyphs" font-size="19" fill="#0c0c0c">0</text>
<text x="719.2" y="597.3" textLength="22.3" lengthAdjust="spacingAndGlyphs" font-size="19" fill="#111" fill-opacity="0.75" >м.</text>
<text x="718.2" y="596.1" textLength="22.3" lengthAdjust="spacingAndGlyphs" font-size="19" fill="#cfd1d0" >м.</text>
<text x="132.6" y="677.3" textLength="83.0" lengthAdjust="spacingAndGlyphs" font-size="19" fill="#111" fill-opacity="0.75" >Ракеты</text>
<text x="131.6" y="676.1" textLength="83.0" lengthAdjust="spacingAndGlyphs" font-size="19" fill="#cfd1d0" >Ракеты</text>
<text transform="translate(228.80,675.60) scale(1,0.72)" x="0" y="0" textLength="11.53" lengthAdjust="spacingAndGlyphs" font-size="19" fill="#0c0c0c">1</text>
<text transform="translate(240.33,675.60) scale(1,0.72)" x="0" y="0" textLength="11.53" lengthAdjust="spacingAndGlyphs" font-size="19" fill="#0c0c0c">0</text>
<text transform="translate(251.87,675.60) scale(1,0.72)" x="0" y="0" textLength="11.53" lengthAdjust="spacingAndGlyphs" font-size="19" fill="#0c0c0c">0</text>
<text xml:space="preserve" style="white-space:pre" x="263.40" y="675.6" textLength="5.77" lengthAdjust="spacingAndGlyphs" font-size="19" fill="#0c0c0c">.</text>
<text transform="translate(269.17,675.60) scale(1,0.72)" x="0" y="0" textLength="11.53" lengthAdjust="spacingAndGlyphs" font-size="19" fill="#0c0c0c">0</text>
<text x="333.5" y="677.3" textLength="21.3" lengthAdjust="spacingAndGlyphs" font-size="19" fill="#111" fill-opacity="0.75" >м.</text>
<text x="332.5" y="676.1" textLength="21.3" lengthAdjust="spacingAndGlyphs" font-size="19" fill="#cfd1d0" >м.</text>
<text x="446.0" y="677.3" textLength="154.8" lengthAdjust="spacingAndGlyphs" font-size="19" fill="#111" fill-opacity="0.75" >Таймер ракет:</text>
<text x="445.0" y="676.1" textLength="154.8" lengthAdjust="spacingAndGlyphs" font-size="19" fill="#cfd1d0" >Таймер ракет:</text>
<text transform="translate(614.50,675.60) scale(1,0.72)" x="0" y="0" textLength="10.20" lengthAdjust="spacingAndGlyphs" font-size="19" fill="#0c0c0c">1</text>
<text xml:space="preserve" style="white-space:pre" x="624.70" y="675.6" textLength="5.10" lengthAdjust="spacingAndGlyphs" font-size="19" fill="#0c0c0c">.</text>
<text transform="translate(629.80,675.60) scale(1,0.72)" x="0" y="0" textLength="10.20" lengthAdjust="spacingAndGlyphs" font-size="19" fill="#0c0c0c">2</text>
<text x="720.0" y="677.3" textLength="38.1" lengthAdjust="spacingAndGlyphs" font-size="19" fill="#111" fill-opacity="0.75" >сек.</text>
<text x="719.0" y="676.1" textLength="38.1" lengthAdjust="spacingAndGlyphs" font-size="19" fill="#cfd1d0" >сек.</text>
<text x="768.7" y="676.7" textLength="266.9" lengthAdjust="spacingAndGlyphs" font-size="19" fill="#111" fill-opacity="0.75" >Опознавательные знаки:</text>
<text x="767.7" y="675.5" textLength="266.9" lengthAdjust="spacingAndGlyphs" font-size="19" fill="#cfd1d0" >Опознавательные знаки:</text>
<text x="73.8" y="757.3" textLength="141.0" lengthAdjust="spacingAndGlyphs" font-size="19" fill="#111" fill-opacity="0.75" >Таймер бомб:</text>
<text x="72.8" y="756.1" textLength="141.0" lengthAdjust="spacingAndGlyphs" font-size="19" fill="#cfd1d0" >Таймер бомб:</text>
<text transform="translate(229.40,755.60) scale(1,0.72)" x="0" y="0" textLength="12.06" lengthAdjust="spacingAndGlyphs" font-size="19" fill="#0c0c0c">0</text>
<text xml:space="preserve" style="white-space:pre" x="241.46" y="755.6" textLength="6.03" lengthAdjust="spacingAndGlyphs" font-size="19" fill="#0c0c0c">.</text>
<text transform="translate(247.49,755.60) scale(1,0.72)" x="0" y="0" textLength="12.06" lengthAdjust="spacingAndGlyphs" font-size="19" fill="#0c0c0c">2</text>
<text transform="translate(259.54,759.21) scale(1,0.72)" x="0" y="0" textLength="12.06" lengthAdjust="spacingAndGlyphs" font-size="19" fill="#0c0c0c">4</text>
<text x="334.8" y="757.3" textLength="37.1" lengthAdjust="spacingAndGlyphs" font-size="19" fill="#111" fill-opacity="0.75" >сек.</text>
<text x="333.8" y="756.1" textLength="37.1" lengthAdjust="spacingAndGlyphs" font-size="19" fill="#cfd1d0" >сек.</text>
<text x="876.5" y="757.3" textLength="158.1" lengthAdjust="spacingAndGlyphs" font-size="19" fill="#111" fill-opacity="0.75" >Запас топлива</text>
<text x="875.5" y="756.1" textLength="158.1" lengthAdjust="spacingAndGlyphs" font-size="19" fill="#cfd1d0" >Запас топлива</text>
<text transform="translate(1044.30,755.60) scale(1,0.72)" x="0" y="0" textLength="11.13" lengthAdjust="spacingAndGlyphs" font-size="19" fill="#0c0c0c">1</text>
<text transform="translate(1055.43,755.60) scale(1,0.72)" x="0" y="0" textLength="11.13" lengthAdjust="spacingAndGlyphs" font-size="19" fill="#0c0c0c">0</text>
<text transform="translate(1066.57,755.60) scale(1,0.72)" x="0" y="0" textLength="11.13" lengthAdjust="spacingAndGlyphs" font-size="19" fill="#0c0c0c">0</text>
<text x="1170.8" y="757.3" textLength="14.7" lengthAdjust="spacingAndGlyphs" font-size="19" fill="#111" fill-opacity="0.75" font-style="normal" font-weight="normal">%</text>
<text x="1169.8" y="756.1" textLength="14.7" lengthAdjust="spacingAndGlyphs" font-size="19" fill="#cfd1d0" font-style="normal" font-weight="normal">%</text>
<text x="114.3" y="852.2" textLength="125.4" lengthAdjust="spacingAndGlyphs" font-size="19" fill="#111" fill-opacity="0.75" >Применить</text>
<text x="113.3" y="851.0" textLength="125.4" lengthAdjust="spacingAndGlyphs" font-size="19" fill="#cfd1d0" >Применить</text>
<text x="400.0" y="852.2" textLength="116.5" lengthAdjust="spacingAndGlyphs" font-size="19" fill="#111" fill-opacity="0.75" >Джойстик</text>
<text x="399.0" y="851.0" textLength="116.5" lengthAdjust="spacingAndGlyphs" font-size="19" fill="#cfd1d0" >Джойстик</text>
</g>
</svg>
</body></html>
